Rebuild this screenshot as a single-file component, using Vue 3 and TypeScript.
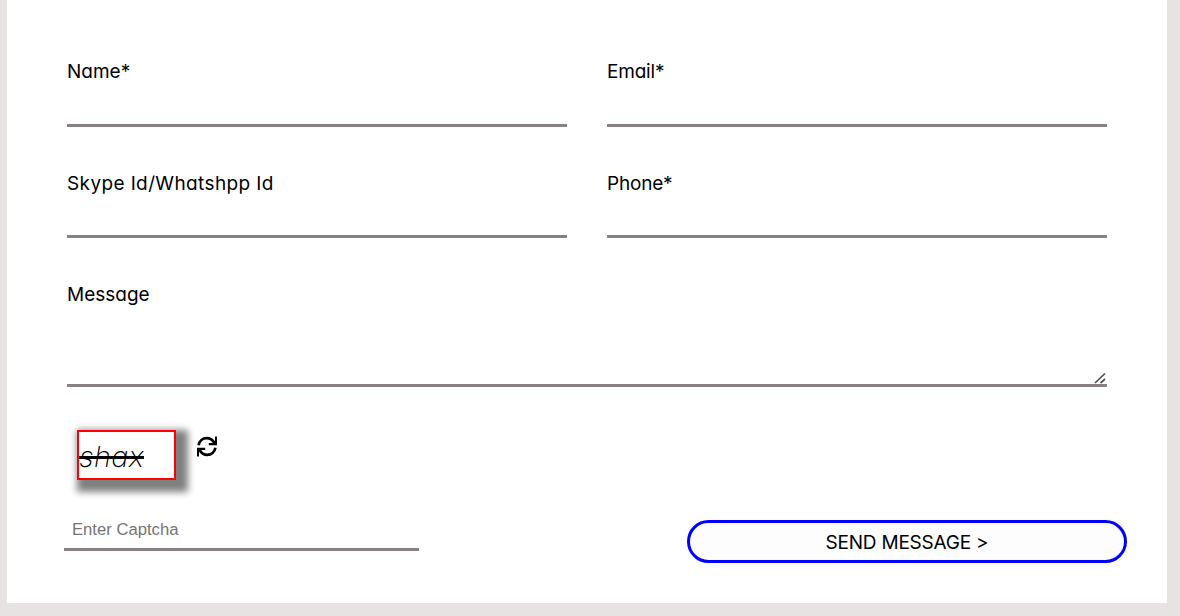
<script setup lang="ts">
import { reactive, ref } from 'vue'

interface Field {
  id: string
  label: string
  type: string
}

const fields: Field[] = [
  { id: 'name', label: 'Name*', type: 'text' },
  { id: 'email', label: 'Email*', type: 'email' },
  { id: 'skype', label: 'Skype Id/Whatshpp Id', type: 'text' },
  { id: 'phone', label: 'Phone*', type: 'tel' },
]

const values = reactive<Record<string, string>>({ name: '', email: '', skype: '', phone: '' })
const message = ref('')
const captcha = ref('')
</script>

<template>
  <main class="page">
    <form class="panel" @submit.prevent>
      <div class="fields">
        <div v-for="f in fields" :key="f.id" :class="['field', f.id]">
          <label :for="f.id">{{ f.label }}</label>
          <input :id="f.id" v-model="values[f.id]" :type="f.type" />
        </div>
        <div class="field wide">
          <label for="message">Message</label>
          <textarea id="message" v-model="message"></textarea>
          <svg class="grip" viewBox="0 0 12 12" width="12" height="12" aria-hidden="true">
            <path d="M1 11L11 1.5M6.5 11L11 7" fill="none" stroke="#505050" stroke-width="1.7" />
          </svg>
        </div>
      </div>
      <div class="bottom">
        <div class="captcha">
          <div class="challenge">
            <div class="code"><span>shax</span></div>
            <svg class="refresh" viewBox="0 0 20 21" width="20" height="21" aria-label="Refresh captcha">
              <g fill="none" stroke="#000" stroke-width="2.7">
                <path d="M1.6 9.2C2.4 4.8 5.7 2.1 9.8 2.1c3.3 0 5.6 1.5 7.6 4.6" />
                <path d="M18.4 11.8c-.8 4.4-4.1 7.1-8.2 7.1-3.3 0-5.6-1.5-7.6-4.6" />
              </g>
              <path d="M18 .6h2v8.6h-8.2V7.1h3.4L18 5z" />
              <path d="M2 20.4H0v-8.6h8.2v2.1H4.8L2 16z" />
            </svg>
          </div>
          <input v-model="captcha" class="answer" type="text" placeholder="Enter Captcha" />
        </div>
        <button class="send" type="submit"><span>SEND MESSAGE &gt;</span></button>
      </div>
    </form>
  </main>
</template>

<style>
body {
  margin: 0;
  background: #e7e3e2;
}
</style>

<style scoped>
.page {
  box-sizing: border-box;
  height: 616px;
  padding: 0 13px 13px 7px;
  overflow: hidden;
  background: #e7e3e2;
  font-family: Inter, Lato, sans-serif;
  font-feature-settings: 'cv11' 1;
  color: #000;
}
.panel {
  box-sizing: border-box;
  height: 603px;
  padding: 58px 40px 0 57px;
  background: #fff;
}
.fields {
  display: grid;
  grid-template-columns: 500px 500px;
  grid-template-rows: 69px 69px 107px;
  column-gap: 40px;
  row-gap: 42px;
  margin-left: 3px;
}
.field {
  display: flex;
  flex-direction: column;
}
.wide {
  position: relative;
  grid-column: 1 / -1;
}
label {
  height: 30px;
  font-size: 19px;
  font-weight: 430;
  line-height: 30px;
  white-space: nowrap;
}
.name label,
.email label {
  line-height: 28px;
}
.skype label {
  letter-spacing: 0.38px;
}
.email label,
.phone label {
  letter-spacing: -0.2px;
}
input,
textarea {
  box-sizing: border-box;
  flex: 1;
  width: 100%;
  min-height: 0;
  margin: 0;
  padding: 4px;
  border: 0;
  border-bottom: 3px solid #878281;
  border-radius: 0;
  outline: 0;
  background: transparent;
  font: 17px "Liberation Sans", sans-serif;
}
textarea {
  resize: none;
}
.grip {
  position: absolute;
  right: 1px;
  bottom: 3px;
}
.bottom {
  display: flex;
  justify-content: space-between;
  align-items: flex-start;
  margin-top: 43px;
}
.captcha {
  width: 355px;
}
.challenge {
  display: flex;
  align-items: flex-start;
  height: 80px;
  padding-left: 13px;
}
.code {
  box-sizing: border-box;
  width: 99px;
  height: 50px;
  border: 2px solid #f00;
  background: #fff;
  box-shadow: 6px 6px 7px 6px #808080;
  font-size: 29px;
  font-style: italic;
  font-weight: 200;
  letter-spacing: 0.3px;
  line-height: 50px;
}
.code span {
  text-decoration: line-through 3px #000;
}
.refresh {
  margin: 6px 0 0 21px;
}
.answer {
  display: block;
  height: 41px;
  padding: 2px 8px 0;
  font-size: 16.67px;
}
.answer::placeholder {
  color: #757575;
  opacity: 1;
}
.send {
  width: 440px;
  height: 43px;
  margin: 90px 0 0;
  padding: 2px 0 0;
  border: 3px solid #00f;
  border-radius: 22px;
  background: #fdfdfd;
  color: #000;
  font: 380 19px Inter, Lato, sans-serif;
  letter-spacing: -0.22px;
}
</style>
